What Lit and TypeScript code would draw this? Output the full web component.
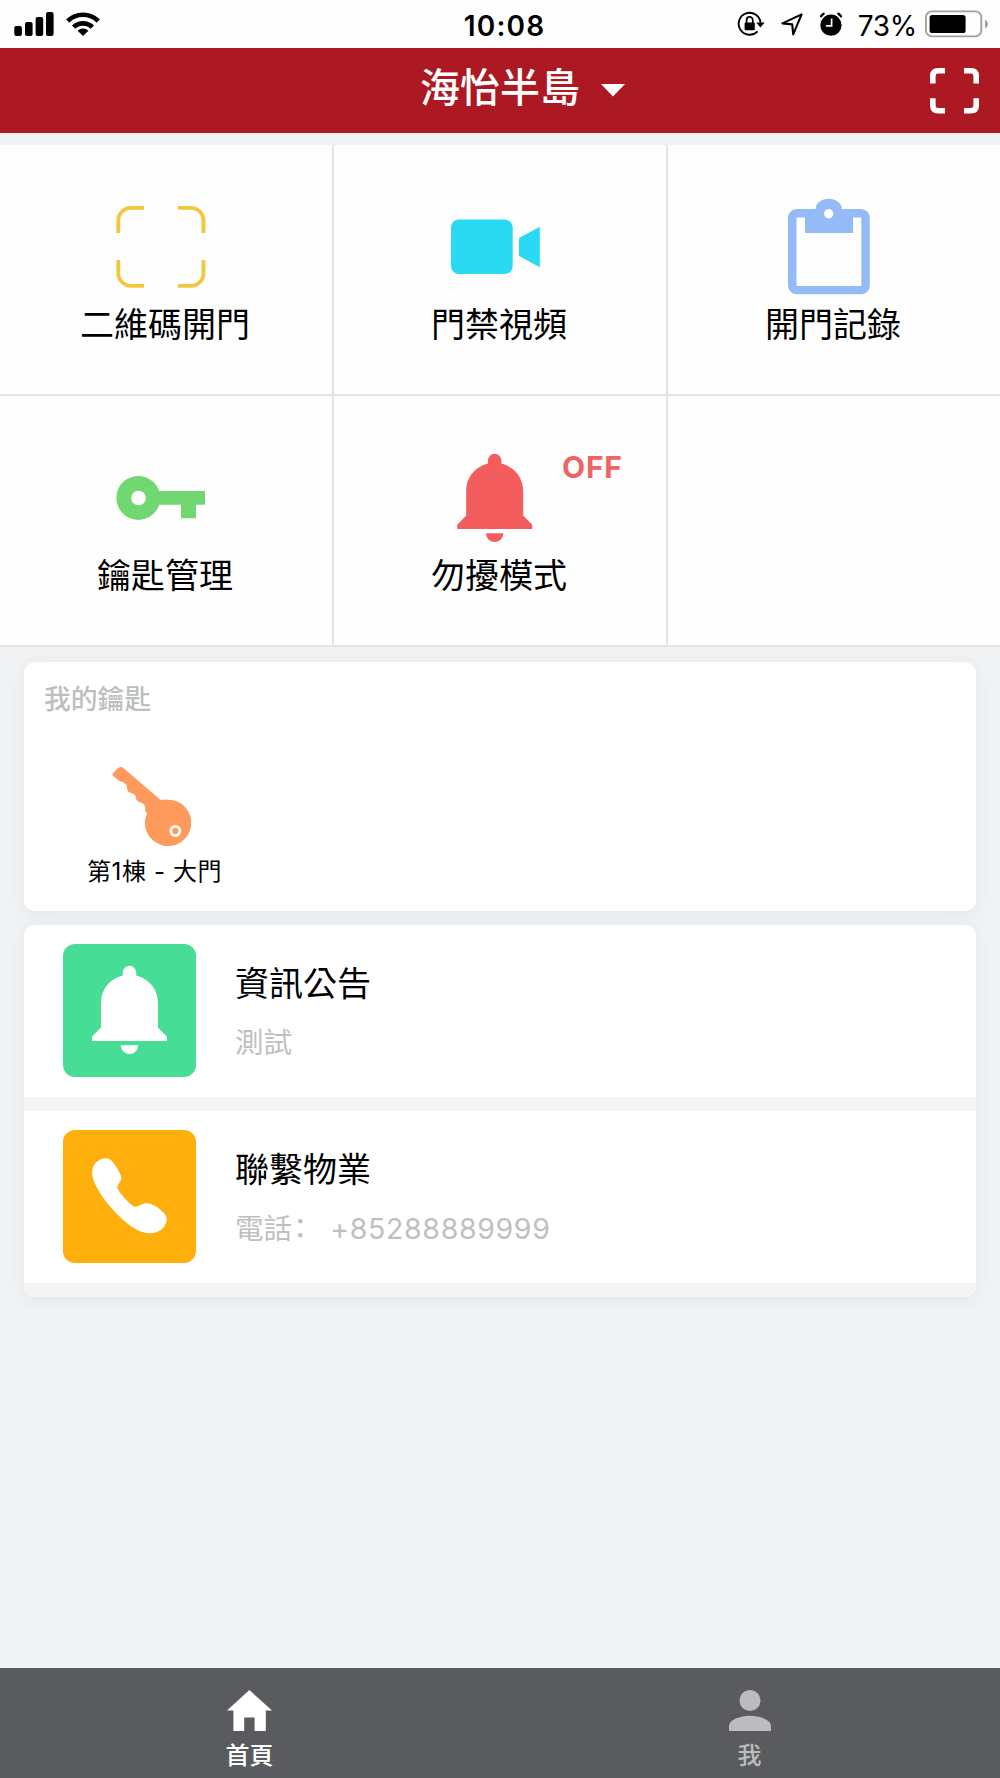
import { LitElement, html, svg, css, nothing } from "lit";
import { customElement, property } from "lit/decorators.js";

const bell = svg`
  <path d="M43 15.6V12.4A6.7 6.7 0 0 1 56.4 12.4V15.6C69 18.6 78.2 29.5 78.2 43V67.5L87.2 76.8V81H12.2V76.8L21.2 67.5V43C21.2 29.5 30.4 18.6 43 15.6Z"/>
  <path d="M41 85.2H58.4A8.7 8.8 0 0 1 41 85.2Z"/>`;

const icons: Record<string, unknown> = {
  scan: svg`<path fill="none" stroke="currentColor" stroke-width="3.8"
    d="M33 10.8H20A12.7 12.7 0 0 0 7.3 23.5V36M67 10.8H79.8A12.7 12.7 0 0 1 92.5 23.5V36M33 88.9H20A12.7 12.7 0 0 1 7.3 76.2V63M67 88.9H79.8A12.7 12.7 0 0 0 92.5 76.2V63"/>`,
  video: svg`<rect x="6" y="22.5" width="61.7" height="54.5" rx="8"/><path d="M74 41L94.8 29.7V70.3L74 59Z"/>`,
  clipboard: svg`<path fill-rule="evenodd"
    d="M17.5 12H36.6A13.1 10.2 0 0 1 62.8 12H82A8.8 8.8 0 0 1 90.8 20.8V88.5A8.8 8.8 0 0 1 82 97.3H17.8A8.8 8.8 0 0 1 9 88.5V20.8A8.8 8.8 0 0 1 17.5 12ZM17.5 20.5V89H82.3V20.5H74V36H26V20.5ZM49.7 12A4.7 4.7 0 1 0 49.7 21.4A4.7 4.7 0 1 0 49.7 12Z"/>`,
  key: svg`<path fill-rule="evenodd"
    d="M48.2 43H94V56.8H85V70.3H70V56.8H48.2A22 22 0 1 1 48.2 43ZM27.5 42.7A7.3 7.3 0 1 0 27.5 57.3A7.3 7.3 0 1 0 27.5 42.7Z"/>`,
  bell,
};

@customElement("status-bar")
class StatusBar extends LitElement {
  static styles = css`
    :host {
      display: flex; align-items: center; height: 48px; background: #fefefe; color: #000;
      font-family: Inter, "Noto Sans CJK TC", sans-serif; line-height: 1;
    }
    svg { display: block; flex: none; }
    .side { flex: 1 1 0; display: flex; align-items: center; }
    .left { padding-left: 14px; gap: 12px; }
    .right { justify-content: flex-end; padding-right: 12px; }
    .time { font-size: 28px; font-weight: 600; letter-spacing: 1.2px; padding-top: 3px; margin-right: -7px; }
    .pct { font-size: 28px; letter-spacing: -0.3px; margin: 3px 8px 0 15px; }
    .lock { margin-right: 16px; }
    .arrow { margin-right: 16px; }
  `;
  render() {
    return html`
      <div class="side left">
        <svg width="40" height="24" viewBox="0 0 40 24">
          <rect x="0.3" y="14" width="7.6" height="10" rx="2"/><rect x="11" y="10" width="7.6" height="14" rx="2"/>
          <rect x="21.6" y="5" width="7.6" height="19" rx="2"/><rect x="32" y="0" width="7.6" height="24" rx="2"/>
        </svg>
        <svg width="34" height="24" viewBox="0 0 34 24">
          <g fill="none" stroke="#000" stroke-width="4.6">
            <path d="M1.7 9A22 22 0 0 1 32.3 9"/><path d="M7.6 15.2A13.4 13.4 0 0 1 26.4 15.2"/>
          </g>
          <path d="M17 24L11.6 18.7A8 8 0 0 1 22.4 18.7Z"/>
        </svg>
      </div>
      <span class="time">10:08</span>
      <div class="side right">
        <svg class="lock" width="28" height="26" viewBox="0 0 28 26">
          <path fill="none" stroke="#000" stroke-width="1.9" d="M20.6 20.4A11 11 0 1 1 23.6 11.6"/>
          <path d="M19.2 11.4H27.6L23.4 16.6Z"/>
          <rect x="7.6" y="11.6" width="10.2" height="7.6" rx="1"/>
          <path fill="none" stroke="#000" stroke-width="1.7" d="M9.6 12V9.2A3.1 3.3 0 0 1 15.8 9.2V12"/>
        </svg>
        <svg class="arrow" width="22" height="24" viewBox="0 0 22 24">
          <path fill="none" stroke="#000" stroke-width="2.1" stroke-linejoin="round" d="M1.4 11.4L20.6 2.4L12.2 22.4L11.2 12.4Z"/>
        </svg>
        <svg width="24" height="24" viewBox="0 0 24 24">
          <circle cx="12" cy="13.2" r="10.6"/>
          <path fill="none" stroke="#000" stroke-width="2.4" stroke-linecap="round" d="M2 4.2A14 14 0 0 1 4.6 1.8M22 4.2A14 14 0 0 0 19.4 1.8"/>
          <path fill="none" stroke="#fefefe" stroke-width="1.7" d="M12.6 6.4V13.8H7"/>
        </svg>
        <span class="pct">73%</span>
        <svg width="63" height="28" viewBox="0 0 63 28">
          <rect x="0.9" y="1.4" width="55.4" height="25" rx="6" fill="none" stroke="#a0a0a0" stroke-width="1.9"/>
          <rect x="4.6" y="5" width="36" height="18" rx="2.6"/>
          <path fill="#a0a0a0" d="M60 9.4Q63 11 63 14Q63 17 60 18.6Z"/>
        </svg>
      </div>`;
  }
}

@customElement("feature-tile")
class FeatureTile extends LitElement {
  @property() icon = "";
  @property() label = "";
  @property() badge = "";
  @property() tint = "";
  static styles = css`
    :host { display: flex; flex-direction: column; align-items: center; padding-top: 52px; position: relative; line-height: 1; }
    .icon { display: block; width: 100px; height: 100px; margin-right: 10px; fill: currentColor; }
    .label { margin: 11px 2px 0 0; font-size: 34px; color: #000; }
    .badge { position: absolute; left: 228px; top: 56px; font-size: 30px; font-weight: 700; letter-spacing: 0.8px; color: #ef6463; }
  `;
  render() {
    return html`
      ${this.icon
        ? html`<svg class="icon" viewBox="0 0 100 100" style="color:${this.tint}">${icons[this.icon]}</svg>`
        : nothing}
      <div class="label">${this.label}</div>
      ${this.badge ? html`<div class="badge">${this.badge}</div>` : nothing}`;
  }
}

@customElement("app-root")
class AppRoot extends LitElement {
  private tiles = [
    { icon: "scan", label: "二維碼開門", tint: "#f3c73d", badge: "" },
    { icon: "video", label: "門禁視頻", tint: "#2adaf3", badge: "" },
    { icon: "clipboard", label: "開門記錄", tint: "#95baf8", badge: "" },
    { icon: "key", label: "鑰匙管理", tint: "#70d771", badge: "" },
    { icon: "bell", label: "勿擾模式", tint: "#f45d5e", badge: "OFF" },
    { icon: "", label: "", tint: "", badge: "" },
  ];

  static styles = css`
    :host {
      display: flex; flex-direction: column; width: 1000px; height: 1778px; overflow: hidden;
      background: #f0f2f4; color: #000; line-height: 1;
      font-family: Inter, "Noto Sans CJK TC", sans-serif;
    }
    svg { display: block; flex: none; }
    .header {
      height: 85px; margin-bottom: 12px; background: #ad1922; color: #fff;
      display: grid; grid-template-columns: 1fr auto 1fr; align-items: start;
    }
    .title { grid-column: 2; font-size: 40px; font-weight: 500; padding-top: 20px; }
    .after { display: flex; justify-content: space-between; padding: 20px 21px 0 21px; }
    .caret { margin-top: 16px; }
    .grid {
      display: grid; grid-template-columns: repeat(3, 332px); grid-auto-rows: 249px; gap: 2px;
      background: #e4e4e4; border-bottom: 2px solid #e4e4e4;
    }
    .grid > * { background: #fefefe; }
    .card {
      margin: 0 24.5px 0 24px; background: #fff; border-radius: 11px;
      box-shadow: 0 3px 16px rgba(70, 80, 90, 0.07);
    }
    .keys { margin-top: 15px; height: 249px; display: flex; flex-direction: column; align-items: flex-start; }
    .keys-title { margin: 24px 0 0 20px; font-size: 26.8px; font-weight: 500; color: #bdbec0; }
    .key-item { margin: 54px 0 0 63px; display: flex; flex-direction: column; align-items: center; }
    .key-item svg { margin-right: 6px; }
    .key-name { margin-top: 14px; font-size: 24px; letter-spacing: 0.6px; white-space: pre; }
    .list { margin-top: 14px; overflow: clip; overflow-clip-margin: 30px; }
    .row {
      height: 171px; padding-bottom: 1px; border-bottom: 14px solid #f6f4f5; display: flex; align-items: center;
      padding-left: 39px; gap: 39px;
    }
    .row:last-child { border-radius: 0 0 11px 11px; }
    .tile { width: 133px; height: 133px; border-radius: 12px; display: block; fill: #fff; }
    .green { background: #48dd96; }
    .amber { background: #feaf0c; }
    .row-title { font-size: 34px; margin-top: 4px; }
    .row-sub { display: flex; margin-top: 28px; font-size: 28.5px; color: #bfbfc1; }
    .colon { margin-left: 1px; font-feature-settings: "halt"; }
    .phone { letter-spacing: 0.65px; margin-left: 23px; }
    .tabs { margin-top: auto; height: 110px; display: grid; grid-template-columns: 1fr 1fr; background: #5a5b5e; color: #bcbcbf; }
    .tab { display: flex; flex-direction: column; align-items: center; padding: 22px 1px 0 0; font-size: 24px; font-weight: 500; fill: currentColor; }
    .tab.on { color: #fff; }
    .tab span { margin-top: 13px; }
  `;

  render() {
    return html`
      <status-bar></status-bar>
      <header class="header">
        <div class="title">海怡半島</div>
        <div class="after">
          <svg class="caret" width="24" height="13" viewBox="0 0 24 13" fill="#fff"><path d="M0 0H24L12 12.5Z"/></svg>
          <svg width="49" height="46" viewBox="0 0 49 46" fill="none" stroke="#fff" stroke-width="5.6">
            <path d="M15 2.8H8Q2.8 2.8 2.8 8V15.4M34 2.8H41Q46.2 2.8 46.2 8V15.4M15 42.8H8Q2.8 42.8 2.8 37.6V30.2M34 42.8H41Q46.2 42.8 46.2 37.6V30.2"/>
          </svg>
        </div>
      </header>

      <section class="grid">
        ${this.tiles.map((t) => html`<feature-tile .icon=${t.icon} .label=${t.label} .tint=${t.tint} .badge=${t.badge}></feature-tile>`)}
      </section>

      <section class="card keys">
        <div class="keys-title">我的鑰匙</div>
        <div class="key-item">
          <svg width="79" height="79" viewBox="338 351 237 237">
            <path fill="#ff995c" d="M340 371Q350 356 362 351Q368 350 373 355L484 450Q494 448 505 449A69.5 69.5 0 1 1 443 490Q435 483 438 476Q438 466 430 460Q420 460 412 450Q409 446 409 438Q404 430 396 429Q385 427 384 418Q383 403 373 397Q362 396 357 391L341 377Q338 374 340 371Z"/>
            <circle cx="528" cy="543" r="13.7" fill="none" stroke="#fff" stroke-width="8.6"/>
          </svg>
          <div class="key-name">第1棟 - 大門</div>
        </div>
      </section>

      <section class="card list">
        <div class="row">
          <svg class="tile green" viewBox="0 0 133 133"><g transform="translate(16.8 16)">${bell}</g></svg>
          <div>
            <div class="row-title">資訊公告</div>
            <div class="row-sub">測試</div>
          </div>
        </div>
        <div class="row">
          <svg class="tile amber" viewBox="0 0 133 133">
            <path d="M29.2 44C28.6 34 35 29.3 42 28.3C45 28 47.6 29.3 49.6 31.8C53 36.3 56.4 41.5 58 46C59.6 51 54 54 54.3 58.3C58 65 64 71.5 70.8 76.6C74 78 77.5 73.5 83.5 73.2C90 73 97.5 79 102 84.3C104.4 87.5 104 91.6 102.3 94.8C99 101 92 103.8 85.5 103.2C77 102.4 70 98 63.5 92.8C52 83 40.5 70.5 33.6 57C31.4 52.6 29.4 48.5 29.2 44Z"/>
          </svg>
          <div>
            <div class="row-title">聯繫物業</div>
            <div class="row-sub"><span>電話</span><span class="colon">：</span><span class="phone">+85288889999</span></div>
          </div>
        </div>
      </section>

      <nav class="tabs">
        <div class="tab on">
          <svg width="45" height="41" viewBox="0 0 45 41"><path d="M22.4 0L45 20.5H38.8V41H27.6V27.5H17.2V41H6.4V20.5H0Z"/></svg>
          <span>首頁</span>
        </div>
        <div class="tab">
          <svg width="42" height="41" viewBox="0 0 42 41"><circle cx="21" cy="10.5" r="10.5"/><path d="M0 41V36C0 30 11 25.8 21 25.8S42 30 42 36V41Z"/></svg>
          <span>我</span>
        </div>
      </nav>`;
  }
}
